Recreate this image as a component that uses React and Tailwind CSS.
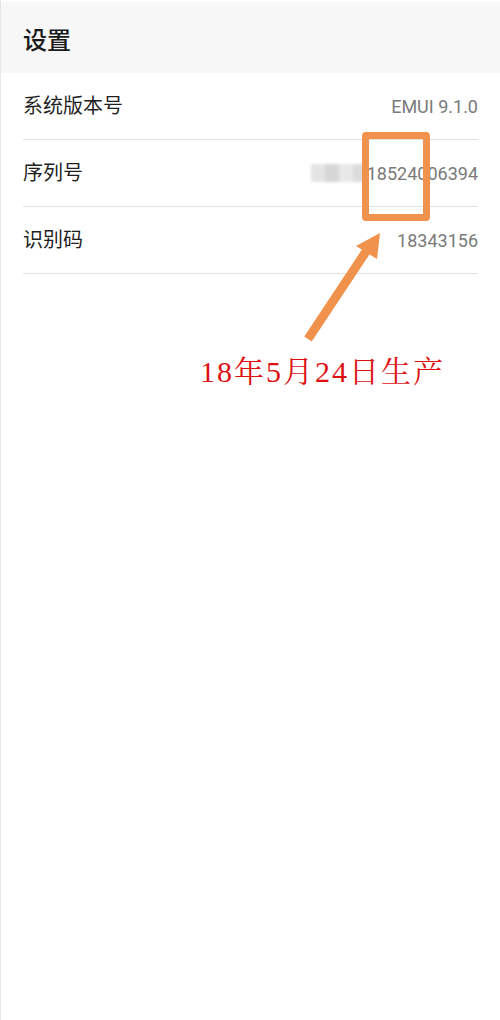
export default function App() {
  const rows = [
    { label: "系统版本号", value: "EMUI 9.1.0" },
    { label: "序列号", value: "18524006394", blurred: true },
    { label: "识别码", value: "18343156" },
  ];

  return (
    <div className="relative w-[500px] h-[1020px] bg-white border-l border-[#e6e6e6] overflow-hidden font-['Roboto','Noto_Sans_CJK_SC',sans-serif]">
      <div className="mt-[2px] h-[71px] bg-[#f7f7f7] flex items-center pl-[22px] pt-[6px]">
        <h1 className="text-[24px] leading-none text-[#1a1a1a] font-medium">设置</h1>
      </div>

      <div className="px-[22px]">
        {rows.map((row) => (
          <div key={row.label} className="h-[67px] flex items-center justify-between border-b border-[#e2e2e2]">
            <span className="text-[20px] text-[#1f1f1f]">{row.label}</span>
            <span className="flex items-center text-[18px] text-[#7a7a7a]">
              {row.blurred && (
                <span className="flex h-[18px] w-[54px] mr-[2px] blur-[1.5px]">
                  <span className="w-[14px] bg-[#e4e4e4]" />
                  <span className="w-[14px] bg-[#d6d6d6]" />
                  <span className="w-[14px] bg-[#e8e8e8]" />
                  <span className="w-[12px] bg-[#dcdcdc]" />
                </span>
              )}
              {row.value}
            </span>
          </div>
        ))}
      </div>

      {/* annotation: box */}
      <div className="absolute left-[361px] top-[132px] w-[68px] h-[89px] border-[7px] border-[#f0924b] rounded-[4px]" />

      {/* annotation: arrow */}
      <svg className="absolute left-0 top-0" width="500" height="400" viewBox="0 0 500 400">
        <line x1="307" y1="339" x2="366" y2="250" stroke="#f0924b" strokeWidth="9" />
        <polygon points="379,233 355,246 376,259" fill="#f0924b" />
      </svg>

      {/* annotation: text */}
      <div className="absolute left-[199px] top-[357px] text-[30px] leading-none text-[#dd1111] tracking-[2px] font-['Liberation_Serif','Noto_Serif_CJK_SC','Noto_Sans_CJK_SC',serif]">
        18年5月24日生产
      </div>
    </div>
  );
}
